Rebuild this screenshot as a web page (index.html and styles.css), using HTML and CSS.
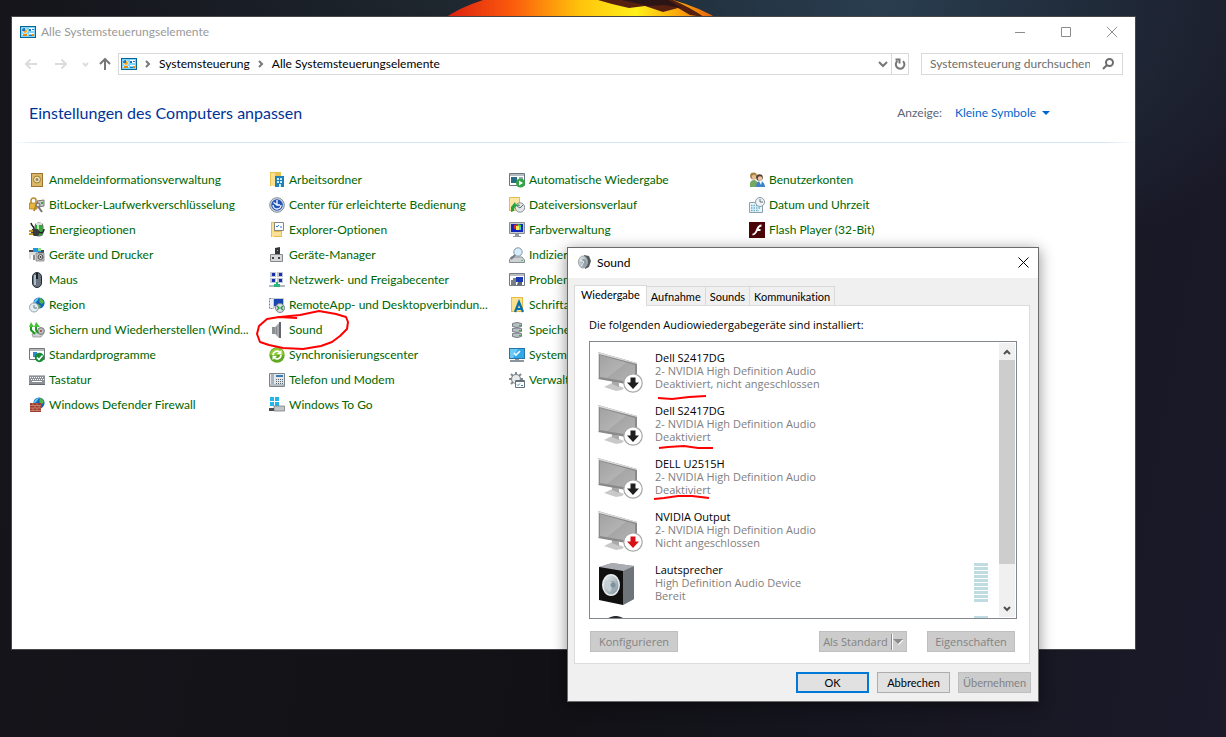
FILE: index.html
```html
<!DOCTYPE html>
<html lang="de">
<head>
<meta charset="utf-8">
<title>Alle Systemsteuerungselemente</title>
<link rel="stylesheet" href="styles.css">
</head>
<body>
<svg class="defs" aria-hidden="true">
  <defs>
    <linearGradient id="screenGrey" x1="0" y1="0" x2="1" y2="1"><stop offset="0" stop-color="#a2a2a2"/><stop offset=".5" stop-color="#b2b2b2"/><stop offset=".52" stop-color="#a6a6a6"/><stop offset="1" stop-color="#b4b4b4"/></linearGradient>
    <linearGradient id="cone" x1="0" y1="0" x2="1" y2="1"><stop offset="0" stop-color="#e8eef1"/><stop offset="1" stop-color="#7f929b"/></linearGradient>
    <linearGradient id="sun" x1="0" x2="1"><stop offset="0" stop-color="#d81c10"/><stop offset=".25" stop-color="#fb5a0c"/><stop offset=".5" stop-color="#ffc40c"/><stop offset=".7" stop-color="#fff01a"/><stop offset=".85" stop-color="#fba60c"/><stop offset="1" stop-color="#e2560e"/></linearGradient>
    <symbol id="cpl" viewBox="0 0 16 12"><path fill="#0a6496" d="M0 0h16v12H0z"/><path fill="#7fd4fa" d="M1 1h14v10H1z"/><circle cx="5" cy="5" r="2.500" fill="#fff"/><circle cx="5" cy="5" r="2" fill="#f5a31a"/><path fill="#1c74c4" d="M5 5V2a3 3 0 0 0-3 3z"/><path fill="#fff" d="M9 2h5v3H9zM2 8h6v1H2zM9 7h5v1H9z"/><path fill="#1c74c4" d="M9 3h2v2H9zM12 3h2v1h-2zM9 9h4v1H9z"/><path fill="#f08a00" d="M3 8h4v2H3zM12 8h2v2h-2z"/></symbol>
    <symbol id="monitor" viewBox="0 0 46 44"><path fill="#c9c9c9" d="M6 36l8-4 12 5-2 2-6 1z"/><path fill="#aaa" d="M14 29l7 3v4l-7-3z"/><path fill="#8a8a8a" d="M0 1l39 11v23L0 28z"/><path fill="#ddd" d="M0 1l39 11v1L1 3v24l-1 1z"/><path fill="url(#screenGrey)" d="M2 4l35 10v18L2 26z"/></symbol>
    <symbol id="down" viewBox="0 0 20 20"><circle cx="10" cy="10" r="9.200" fill="#fff" stroke="#a8a8a8" stroke-width="1.200"/><path fill="currentColor" d="M7.500 4.500h5v5H16l-6 6.500-6-6.500h3.500z"/></symbol>
    <symbol id="globe" viewBox="0 0 16 16"><circle cx="10" cy="6" r="5.600" fill="#1564b8"/><path fill="#63c9f2" d="M5 5c1-3 3-4 5-4l-2 3-3 3z"/><path fill="#4eb444" d="M10 1c3 0 4 2 5 4l-2 2-2-1-1-2 1-1zM9 7l3 2-1 2-2-1z"/></symbol>
  </defs>
</svg>
<main class="desktop">
  <svg class="wallpaper" viewBox="0 0 280 20" aria-hidden="true"><path fill="#3b1117" d="M0 20L40 0h196l44 20z" opacity=".5"/><path fill="url(#sun)" d="M2 20Q18 8 43 0h190q28 8 47 20z"/><path fill="#552010" d="M158 0h75q18 8 31 17l-14-2-12-7-15 4-18-6-16 2-17-4z"/><path fill="#2b1416" d="M182 0h46l14 8-18-3-16 1z"/></svg>

  <section class="window" aria-label="Alle Systemsteuerungselemente">
    <header class="titlebar">
      <svg class="cpl"><use href="#cpl"/></svg>
      <h1 class="title">Alle Systemsteuerungselemente</h1>
      <div class="caption">
        <button class="cap" aria-label="Minimieren"><svg viewBox="0 0 10 10"><path d="M0 5.500h10"/></svg></button>
        <button class="cap" aria-label="Maximieren"><svg viewBox="0 0 10 10"><path d="M.5.5h9v9h-9z"/></svg></button>
        <button class="cap" aria-label="Schließen"><svg viewBox="0 0 10 10"><path d="M0 0l10 10M10 0L0 10"/></svg></button>
      </div>
    </header>
    <nav class="toolbar" aria-label="Navigation">
      <button class="nav faint" aria-label="Zurück"><svg viewBox="0 0 12 12"><path d="M12 6H1M5.500 1.500L1 6l4.500 4.500"/></svg></button>
      <button class="nav faint" aria-label="Vorwärts"><svg viewBox="0 0 12 12"><path d="M0 6h11M6.500 1.500L11 6l-4.500 4.500"/></svg></button>
      <button class="nav small faint" aria-label="Verlauf"><svg viewBox="0 0 12 12"><path d="M1 5l2.500 2.500L6 5"/></svg></button>
      <button class="nav up" aria-label="Nach oben"><svg viewBox="0 0 12 12"><path d="M6 12V1M1 6l5-5 5 5"/></svg></button>
      <div class="address">
        <svg class="cpl"><use href="#cpl"/></svg>
        <svg class="sep" viewBox="0 0 6 8"><path d="M1 1l3 3-3 3"/></svg>
        <a class="crumb" href="#">Systemsteuerung</a>
        <svg class="sep" viewBox="0 0 6 8"><path d="M1 1l3 3-3 3"/></svg>
        <a class="crumb" href="#">Alle Systemsteuerungselemente</a>
        <button class="addr-btn drop" aria-label="Vorherige Orte"><svg viewBox="0 0 12 12"><path d="M2 4l4 4 4-4"/></svg></button>
        <button class="addr-btn reload" aria-label="Aktualisieren"><svg viewBox="0 0 12 12"><path d="M3.500 3A4.300 4.300 0 1 0 9 3.200M1.500 1.500h4v4"/></svg></button>
      </div>
      <div class="search">
        <input class="search-box" type="search" placeholder="Systemsteuerung durchsuchen" aria-label="Systemsteuerung durchsuchen">
        <svg viewBox="0 0 12 12"><circle cx="7.500" cy="4.500" r="3.500"/><path d="M5 7L1 11"/></svg>
      </div>
    </nav>
    <div class="head">
      <h2 class="heading">Einstellungen des Computers anpassen</h2>
      <label class="view-label" for="view">Anzeige:</label>
      <span class="view"><select id="view" class="view-select"><option>Kleine Symbole</option></select><svg viewBox="0 0 8 4"><path d="M0 0h8L4 4z"/></svg></span>
    </div>
    <div class="items">
      <ul class="col">
        <li><a class="item" href="#"><svg class="ico" viewBox="0 0 16 16"><path fill="#9a7430" d="M2 1h12v14H2z"/><path fill="#d9b968" d="M3 2h10v12H3z"/><circle cx="8" cy="7.500" r="3.500" fill="#f2e0ac" stroke="#a27b36"/><circle cx="8" cy="7.500" r="1.500" fill="#94866a"/></svg>Anmeldeinformationsverwaltung</a></li>
        <li><a class="item" href="#"><svg class="ico" viewBox="0 0 16 16"><path fill="#c8c8c8" stroke="#777" d="M8 4l7-1v6l-5 1z"/><path fill="#4b9b46" d="M12 5h2v2h-2z"/><path fill="none" stroke="#b88a2a" stroke-width="1.500" d="M2 6V3.500a2.300 2.300 0 0 1 5 0V6"/><path fill="#e6b53c" stroke="#9d7220" stroke-width=".7" d="M.5 6h7.500v6H.5z"/><path stroke="#bd8520" stroke-width="2" d="M8 6l-3 8"/><path stroke="#777" stroke-width="2" d="M8 8l5 7"/><circle cx="9" cy="8" r="2" fill="#ddd" stroke="#666"/></svg>BitLocker-Laufwerkverschlüsselung</a></li>
        <li><a class="item" href="#"><svg class="ico" viewBox="0 0 16 16"><rect x="6" y="1" width="8" height="13" rx="3" fill="#2eaa37" stroke="#777"/><path fill="#bce9b5" d="M8 3h2v9H8z"/><path fill="#ddd" d="M7 1h6v2H7z"/><path stroke="#222" stroke-width="1.500" fill="none" d="M2 1c1 4 3 3 3 6"/><path fill="#383b3d" d="M3 7h6l2 3-2 4H5l-3-3z"/><path stroke="#c4971e" stroke-width="2" d="M0 9h4M0 12h4"/><path stroke="#222" stroke-width="1.500" fill="none" d="M10 10c3 2 5 0 5-3"/></svg>Energieoptionen</a></li>
        <li><a class="item" href="#"><svg class="ico" viewBox="0 0 16 16"><path fill="#444b50" d="M0 3h15v4H0z"/><path fill="#2694dd" d="M4 1h8v4H4z"/><path fill="#8de08b" d="M9 1h3v3H9z"/><path fill="#dedede" d="M0 5h9v3H2v4H0z"/><path fill="#8c8c8c" d="M4 8h2v5H4z"/><path fill="#bec1c4" stroke="#868686" stroke-width=".8" d="M7 6h8v8H7z"/><circle cx="11.500" cy="10" r="2.400" fill="#eee" stroke="#444"/><circle cx="11.500" cy="10" r="1" fill="#333"/></svg>Geräte und Drucker</a></li>
        <li><a class="item" href="#"><svg class="ico" viewBox="0 0 16 16"><rect x="3.500" y=".5" width="9" height="15" rx="4.500" fill="#68737e" stroke="#222a32"/><path fill="#adb9c4" d="M5 3h2v10H5z"/><path stroke="#17212a" stroke-width="2" d="M8 1v6"/></svg>Maus</a></li>
        <li><a class="item" href="#"><svg class="ico" viewBox="0 0 16 16"><use href="#globe"/><circle cx="5" cy="10.500" r="4.500" fill="#e4edf1" stroke="#98a5ac"/><path fill="none" stroke="#6b7b84" d="M5 8v3h3"/></svg>Region</a></li>
        <li><a class="item" href="#"><svg class="ico" viewBox="0 0 16 16"><path fill="#cfd3d6" stroke="#888" stroke-width=".7" d="M3 12l7-4 5 3-3 4H4z"/><circle cx="12" cy="9" r="3.400" fill="#b9bec2" stroke="#777"/><circle cx="12" cy="9" r="1" fill="#b73827"/><path fill="none" stroke="#1a9b1d" stroke-width="2" d="M2 3v5l4 4M9 11L7 8V3"/><path fill="#45c236" d="M0 5l2-5 3 5zM5 5l2-5 4 5z"/></svg>Sichern und Wiederherstellen (Wind...</a></li>
        <li><a class="item" href="#"><svg class="ico" viewBox="0 0 16 16"><path fill="#fff" stroke="#72777c" d="M.5 1.500h15v11H.5z"/><path stroke="#72777c" d="M0 3h16"/><path fill="#2e89cf" d="M4 5h4v5H4z"/><circle cx="10.500" cy="10.500" r="4.700" fill="#188b36"/><path fill="none" stroke="#fff" stroke-width="1.600" d="M8 10.500l2 2 3.500-4"/></svg>Standardprogramme</a></li>
        <li><a class="item" href="#"><svg class="ico" viewBox="0 0 16 16"><path fill="#8a9095" d="M0 3h16v10H0z"/><path fill="#b9bec2" d="M0 3h16v1H0z"/><path fill="#62686d" d="M0 12h16v1H0z"/><path stroke="#fff" stroke-dasharray="1 1" d="M1 5.500h14M2 7.500h13"/><path stroke="#fff" d="M3 9.500h10"/></svg>Tastatur</a></li>
        <li><a class="item" href="#"><svg class="ico" viewBox="0 0 16 16"><use href="#globe"/><path fill="#9d3d2d" d="M1 6h11v9H1z"/><path stroke="#d69382" stroke-width=".7" d="M1 8.500h11M1 11h11M1 13.500h11M4 6v2.500M8 6v2.500M6 8.500V11M10 8.500V11M4 11v2.500M8 11v2.500"/></svg>Windows Defender Firewall</a></li>
      </ul>
      <ul class="col">
        <li><a class="item" href="#"><svg class="ico" viewBox="0 0 16 16"><path fill="#e9c254" d="M1 0h11v14H1z"/><path fill="#fbe092" d="M2 1h4v13H2z"/><path fill="#2181b7" d="M6 4h9v11H6z"/><path fill="#c5edff" d="M8 6h2v2H8zM11 6h2v2h-2zM8 9h2v2H8zM11 9h2v2h-2zM10 12h2v3h-2z"/></svg>Arbeitsordner</a></li>
        <li><a class="item" href="#"><svg class="ico" viewBox="0 0 16 16"><circle cx="8" cy="8" r="7.300" fill="#d5dae0" stroke="#858c95"/><circle cx="8" cy="8" r="5.800" fill="#2355b8"/><path fill="none" stroke="#fff" stroke-width="1.300" d="M4 8a4 4 0 0 0 8 0M8 3v5h3M4.500 5.500L8 8"/></svg>Center für erleichterte Bedienung</a></li>
        <li><a class="item" href="#"><svg class="ico" viewBox="0 0 16 16"><path fill="#e8bd49" d="M2 0h11v15H2z"/><path fill="#fbe196" d="M3 1h2v14H3zM5 10h7v4H5z"/><path fill="#fff" stroke="#7f868c" d="M5.500.5h9v8h-9z"/><path fill="none" stroke="#2b76b8" d="M7 4l1 1 2-2M11 5h2"/></svg>Explorer-Optionen</a></li>
        <li><a class="item" href="#"><svg class="ico" viewBox="0 0 16 16"><path fill="#34383b" d="M6 1l5-1v7H6z"/><path fill="#54d85d" d="M8 3h1v1H8z"/><path fill="#d7d8d9" stroke="#85898c" d="M1.500 7.500h12v7h-12z"/><path fill="#444" d="M3 10h2v2H3zM9 10h2v2H9z"/></svg>Geräte-Manager</a></li>
        <li><a class="item" href="#"><svg class="ico" viewBox="0 0 16 16"><path fill="#c1c8d2" d="M1 0h6v5H1zM8 0h6v5H8zM1 6h6v5H1zM8 6h6v5H8z"/><path fill="#1830ae" d="M3 1h3v3H3zM10 1h3v3h-3zM3 7h3v3H3zM10 7h3v3h-3z"/><path stroke="#b3b8bd" stroke-width="2" d="M0 14h16"/><path fill="#2db67b" d="M7 10h2v2h2v3H5v-3h2z"/></svg>Netzwerk- und Freigabecenter</a></li>
        <li><a class="item" href="#"><svg class="ico" viewBox="0 0 16 16"><path fill="#eef1f7" stroke="#7984a1" stroke-dasharray="2 1" d="M.5 1.500h4v10h-4z"/><path fill="#c6cad2" d="M4 1h11v10H4z"/><path fill="#1745b1" d="M5 2h9v7H5z"/><circle cx="11" cy="11" r="4.500" fill="#d9dee3" stroke="#7b858c"/><path fill="none" stroke="#1b9438" stroke-width="1.300" d="M8 9l2 2-2 2M14 9l-2 2 2 2"/></svg>RemoteApp- und Desktopverbindun...</a></li>
        <li><a class="item" href="#"><svg class="ico" viewBox="0 0 16 16"><path fill="#8c8f94" d="M3 5h3v7H3z"/><path fill="#a5a9ae" d="M6 5l4-4v15l-4-4z"/><path fill="#62666b" d="M10 0h2v16h-2z"/><path fill="#85898e" d="M7 5h1v7H7z"/></svg>Sound</a></li>
        <li><a class="item" href="#"><svg class="ico" viewBox="0 0 16 16"><circle cx="8" cy="8" r="7.700" fill="#5fa81f"/><path fill="#93ca38" d="M8 1a7 7 0 0 0-7 7h14a7 7 0 0 0-7-7z"/><path fill="none" stroke="#fff" stroke-width="1.800" d="M4 8a4 4 0 0 1 6.500-3M12 8a4 4 0 0 1-6.500 3"/><path fill="#fff" d="M12.500 3v4.500L8 7zM3.500 13V8.500L8 9z"/></svg>Synchronisierungscenter</a></li>
        <li><a class="item" href="#"><svg class="ico" viewBox="0 0 16 16"><path fill="#e4e8ec" stroke="#7c858c" d="M.5 1.500h15v13H.5z"/><path fill="#a9b5be" d="M2 2h3v10H2z"/><path fill="#397cb4" d="M7 3h7v2H7z"/><path stroke="#59656d" stroke-dasharray="1 1" d="M7 7.500h7M7 9.500h7M7 11.500h7"/><path stroke="#88939a" d="M1 13h14"/></svg>Telefon und Modem</a></li>
        <li><a class="item" href="#"><svg class="ico" viewBox="0 0 16 16"><path fill="#21b5ea" d="M1 0h4v4H1zM6 0h4v4H6zM1 5h4v4H1zM6 5h4v4H6z"/><path fill="#c3c6c9" stroke="#7b7f82" stroke-width=".8" d="M5 9h10.500v5H5z"/><path fill="#4b4e51" d="M0 11h5v3H0z"/></svg>Windows To Go</a></li>
      </ul>
      <ul class="col">
        <li><a class="item" href="#"><svg class="ico" viewBox="0 0 16 16"><path fill="#fff" stroke="#687782" d="M.5 1.500h15v12H.5z"/><path stroke="#687782" d="M0 3h16"/><path fill="#296d83" d="M2 5h6v6H2z"/><path fill="#9aadb8" d="M10 5h4v3h-4z"/><circle cx="11.500" cy="11" r="4.500" fill="#32a644"/><path fill="#fff" d="M10 8.500l4 2.500-4 2.500z"/></svg>Automatische Wiedergabe</a></li>
        <li><a class="item" href="#"><svg class="ico" viewBox="0 0 16 16"><path fill="#e6bd53" d="M0 0h11v14H0z"/><path fill="#fce6a3" d="M1 1h9v12H1z"/><circle cx="11" cy="10.500" r="4.700" fill="#e4e7e9" stroke="#899198"/><path fill="none" stroke="#606a70" d="M11 11l3-3M11 11L8 9"/><path fill="#26a23e" d="M2 10l4-5 1 3c3-1 4 0 4 1-4-1-6 1-6 5l-3 1z"/></svg>Dateiversionsverlauf</a></li>
        <li><a class="item" href="#"><svg class="ico" viewBox="0 0 16 16"><path fill="#c8cdd2" stroke="#888f96" d="M.5.5h15v11H.5z"/><path fill="#1225bd" d="M2 2h12v8H2z"/><path fill="#e92828" d="M5 3l4-1v4l-4 1z"/><path fill="#40d746" d="M9 2l3 1v4L9 6z"/><path fill="#f4ed4c" d="M7 4h3v4H7z"/><path fill="#3ec8ec" d="M10 5h2v3h-2z"/><path fill="#92999f" d="M6 12h4v2h2v1H4v-1h2z"/></svg>Farbverwaltung</a></li>
        <li><a class="item" href="#"><svg class="ico" viewBox="0 0 16 16"><path fill="#ced2d6" stroke="#878d93" d="M2 10h11l2.500 3v2.500H.5V13z"/><path fill="#48c650" d="M12 13h2v1h-2z"/><circle cx="9" cy="5" r="4.200" fill="#d7eefa" stroke="#8398a6"/><path stroke="#737c84" stroke-width="2" d="M6 8l-4 4"/></svg>Indizierungsoptionen</a></li>
        <li><a class="item" href="#"><svg class="ico" viewBox="0 0 16 16"><path fill="#fff" stroke="#737c85" d="M.5 1.500h15v12H.5z"/><path stroke="#737c85" d="M0 3h16"/><path fill="#777f86" d="M2 8h3v5H2zM4 6h3v7H4z"/><path fill="#1838b6" d="M7 5h7v5H7z"/><path fill="#5e686f" d="M9 10h4v3H8z"/></svg>Problembehandlung</a></li>
        <li><a class="item" href="#"><svg class="ico" viewBox="0 0 16 16"><path fill="#e8bc49" d="M2 0h12v15H2z"/><path fill="#fbe08d" d="M3 1h10v13H3z"/><path fill="none" stroke="#0870af" stroke-width="2.200" d="M6 15l4-10 4 10M7.500 12h5"/></svg>Schriftarten</a></li>
        <li><a class="item" href="#"><svg class="ico" viewBox="0 0 16 16"><path fill="#b9bec3" stroke="#777e85" d="M3.500 1.500q4.500-2 9 0v3q-4.500 2-9 0zM3.500 6.500q4.500-1 9 0v3q-4.500 2-9 0zM3.500 11.500q4.500-1 9 0v3q-4.500 2-9 0z"/><path fill="#38ae43" d="M10 3h2v1h-2zM10 8h2v1h-2zM10 13h2v1h-2z"/></svg>Speicherplätze</a></li>
        <li><a class="item" href="#"><svg class="ico" viewBox="0 0 16 16"><path fill="#2b73a0" d="M0 1h16v11H0z"/><path fill="#30a9eb" d="M1 2h14v9H1z"/><path fill="#6bc9f5" d="M1 2h8L4 11H1z"/><path fill="none" stroke="#fff" stroke-width="1.600" d="M5 6l2 2 4-4"/><path fill="#8d969c" d="M6 12h4v1h5v2H1v-2h5z"/></svg>System</a></li>
        <li><a class="item" href="#"><svg class="ico" viewBox="0 0 16 16"><circle cx="7" cy="7" r="4.500" fill="#e8eaec" stroke="#82898f" stroke-width="1.200"/><path stroke="#82898f" stroke-width="2" d="M7 0v3M2 2l2 2M0 7h3M12 2l-2 2M2 12l2-2M11 7h3"/><path fill="#fff" stroke="#64717b" d="M6.500 8.500h9v7h-9z"/><path stroke="#64717b" d="M6 9.500h10"/><path stroke="#3c81b5" d="M8 12.500l1 1 2-2M12 13.500h2" fill="none"/></svg>Verwaltung</a></li>
      </ul>
      <ul class="col">
        <li><a class="item" href="#"><svg class="ico" viewBox="0 0 16 16"><circle cx="4.500" cy="4" r="3.400" fill="#a8813f"/><circle cx="5" cy="5" r="2.200" fill="#e6bc94"/><path fill="#75a662" d="M1 15q-1-7 4-7 4 0 4 7z"/><circle cx="10.500" cy="5.500" r="3.300" fill="#54402c"/><circle cx="11" cy="6.500" r="2.200" fill="#edc7a6"/><path fill="#3f82c5" d="M7 15q0-6 4-6t5 5v1z"/><path fill="#fff" d="M10 9h3l-1 4z"/></svg>Benutzerkonten</a></li>
        <li><a class="item" href="#"><svg class="ico" viewBox="0 0 16 16"><path fill="#eaf5fa" stroke="#8ca3ae" d="M.5 5.500h13v10H.5z"/><path stroke="#66aeca" stroke-width="1.300" stroke-dasharray="1.500 1" d="M2 8.500h10M2 11h10M2 13.500h8"/><circle cx="11" cy="5" r="4.500" fill="#f0f4f5" stroke="#8c9aa2"/><path fill="none" stroke="#64737b" d="M11 2v3h3"/></svg>Datum und Uhrzeit</a></li>
        <li><a class="item" href="#"><svg class="ico" viewBox="0 0 16 16"><path fill="#4a0508" d="M0 0h16v16H0z"/><path fill="none" stroke="#fff" stroke-width="2" d="M12.500 3.500c-3 0-3.500 2-4.500 4.500S5.500 12.500 3.500 12.500M8 8h3.500"/></svg>Flash Player (32-Bit)</a></li>
        <li><a class="item" href="#"><svg class="ico" viewBox="0 0 16 16"><circle cx="6" cy="7" r="7" fill="#397bb0"/></svg>Internetoptionen</a></li>
      </ul>
    </div>
    <svg class="mark-circle" viewBox="0 0 94 40" aria-hidden="true"><path d="M41 4l-18-1L11 5 3 12 1 20l3 8 9 3 14 3 20 1 18-3 11-4 8-6 7-7 1-7-2-5-10-3-17-3L44 1 24 3"/></svg>
  </section>

  <section class="dialog" role="dialog" aria-label="Sound">
    <header class="dlg-title">
      <svg class="dlg-icon" viewBox="0 0 16 16"><path fill="#555a5d" d="M7 1l5 1 2 5-2 6-4 2z"/><ellipse cx="6" cy="8" rx="4.500" ry="6" fill="url(#cone)" stroke="#a0a8ab"/><ellipse cx="7" cy="8" rx="2" ry="3" fill="#8d9ba2"/><path stroke="#f4f4f4" fill="none" d="M3 6l4 2-3 4"/></svg>
      <h2 class="dlg-name">Sound</h2>
      <button class="dlg-close" aria-label="Schließen"><svg viewBox="0 0 11 11"><path d="M.5.5l10 10M10.500.5l-10 10"/></svg></button>
    </header>
    <div class="dlg-body">
      <div class="tabs" role="tablist">
        <button class="tab active" role="tab" aria-selected="true">Wiedergabe</button>
        <button class="tab" role="tab">Aufnahme</button>
        <button class="tab" role="tab">Sounds</button>
        <button class="tab" role="tab">Kommunikation</button>
      </div>
      <div class="panel" role="tabpanel">
        <p class="intro" id="intro">Die folgenden Audiowiedergabegeräte sind installiert:</p>
        <div class="listbox">
          <ul class="devices" aria-labelledby="intro">
            <li class="device"><span class="pic"><svg class="mon"><use href="#monitor"/></svg><svg class="badge"><use href="#down"/></svg></span><span class="info"><b>Dell S2417DG</b><span>2- NVIDIA High Definition Audio</span><span>Deaktiviert, nicht angeschlossen</span></span><svg class="underline" viewBox="0 0 60 8" aria-hidden="true"><path d="M3 5l14 1 17-2 17-1"/></svg></li>
            <li class="device"><span class="pic"><svg class="mon"><use href="#monitor"/></svg><svg class="badge"><use href="#down"/></svg></span><span class="info"><b>Dell S2417DG</b><span>2- NVIDIA High Definition Audio</span><span>Deaktiviert</span></span><svg class="underline" viewBox="0 0 60 8" aria-hidden="true"><path d="M4 2l9-1 16-1 14 2 15 0"/></svg></li>
            <li class="device"><span class="pic"><svg class="mon"><use href="#monitor"/></svg><svg class="badge"><use href="#down"/></svg></span><span class="info"><b>DELL U2515H</b><span>2- NVIDIA High Definition Audio</span><span>Deaktiviert</span></span><svg class="underline" viewBox="0 0 60 8" aria-hidden="true"><path d="M-1 0l10-1 14-2 14 0 17 2"/></svg></li>
            <li class="device"><span class="pic"><svg class="mon"><use href="#monitor"/></svg><svg class="badge red"><use href="#down"/></svg></span><span class="info"><b>NVIDIA Output</b><span>2- NVIDIA High Definition Audio</span><span>Nicht angeschlossen</span></span></li>
            <li class="device"><span class="pic"><svg class="speaker" viewBox="0 0 38 42"><path fill="#8b8e94" d="M1 4l13-4 22 3v33l-11 6z"/><path fill="#6f747b" d="M25 8l11-5v33l-11 6z"/><path fill="#a9acb1" d="M1 4l13-4 22 3-11 5z"/><path fill="#101010" d="M1 4l24 4v34L1 37z"/><ellipse cx="13" cy="22" rx="9" ry="11" fill="#e9edef"/><ellipse cx="13" cy="22" rx="7.500" ry="9.500" fill="url(#cone)"/><ellipse cx="14.500" cy="22" rx="3" ry="4" fill="#93a5ad"/><path fill="#c5d1d6" d="M7 17l9 3-4 9q-6-3-5-12z"/><circle cx="15" cy="22" r="2.500" fill="#7d929c"/></svg></span><span class="info"><b>Lautsprecher</b><span>High Definition Audio Device</span><span>Bereit</span></span><span class="meter"></span></li>
            <li class="device"><span class="pic"><svg class="speaker" viewBox="0 0 38 42"><path fill="none" stroke="#2b2b2b" stroke-width="3" d="M7 6Q18-3 28 6"/></svg></span><span class="info"></span><span class="meter"></span></li>
          </ul>
          <div class="scrollbar">
            <button class="sb-btn" aria-label="Nach oben"><svg viewBox="0 0 12 12"><path d="M3 8l3-3 3 3"/></svg></button>
            <div class="sb-thumb"></div>
            <button class="sb-btn end" aria-label="Nach unten"><svg viewBox="0 0 12 12"><path d="M3 4l3 3 3-3"/></svg></button>
          </div>
        </div>
        <div class="row">
          <button class="btn wide left" disabled>Konfigurieren</button>
          <button class="btn wide split" disabled>Als Standard<svg viewBox="0 0 13 16"><path stroke="#8c8c8c" d="M1.500 0v16"/><path stroke="#fff" d="M2.500 0v16"/><path fill="#fff" d="M4 6h9.500L9 11z"/><path fill="#8c8c8c" d="M3 5h10l-5 5z"/></svg></button>
          <button class="btn wide" disabled>Eigenschaften</button>
        </div>
      </div>
      <footer class="actions">
        <button class="btn ok">OK</button>
        <button class="btn">Abbrechen</button>
        <button class="btn" disabled>Übernehmen</button>
      </footer>
    </div>
  </section>
</main>
</body>
</html>
```
FILE: styles.css
```css
* { box-sizing: border-box; }
body { margin: 0; font: 12px/16px Lato, "Open Sans", sans-serif; font-variant-ligatures: none; color: #000; }
svg { display: block; flex: none; }
ul, h1, h2, p { margin: 0; padding: 0; list-style: none; font-size: inherit; font-weight: 400; }
button, input, select { font: inherit; color: inherit; margin: 0; padding: 0; border: 0; background: none; border-radius: 0; }
a { color: inherit; text-decoration: none; }
.defs { position: absolute; width: 0; height: 0; }

.desktop {
  position: relative; min-height: 100vh; overflow: hidden;
  background:
    radial-gradient(ellipse 440px 300px at 880px 0, #293e50, rgba(41, 62, 80, 0)),
    radial-gradient(ellipse 500px 120px at 520px 0, rgba(36, 48, 58, .8), rgba(36, 48, 58, 0)),
    linear-gradient(100deg, #15151b 0, #111116 50%, #1b1a2a 100%);
}
.wallpaper { position: absolute; left: 440px; top: 0; width: 280px; height: 20px; }

/* Control panel window */
.window {
  position: absolute; inset: 16px 90px 87px 11px;
  display: flex; flex-direction: column;
  background: #fff; border: 1px solid #45474a;
}
.titlebar { display: flex; align-items: center; height: 29px; padding-left: 8px; }
.cpl { width: 16px; height: 12px; }
.title { flex: 1; margin-left: 5px; color: #999; white-space: nowrap; }
.caption { display: flex; }
.cap { width: 46px; height: 29px; display: grid; place-items: center; }
.cap svg { width: 10px; height: 10px; fill: none; stroke: #8c8c8c; }

.toolbar { display: flex; align-items: center; height: 36px; padding: 0 12px 0 10px; }
.nav { width: 30px; height: 22px; display: flex; align-items: center; padding-left: 3px; color: #767676; }
.nav.small { width: 17px; padding: 0; }
.nav.up { width: 19px; padding: 0; }
.nav svg { width: 12px; height: 12px; fill: none; stroke: currentColor; stroke-width: 2; }
.nav.faint { color: #dcdcdc; }
.address { flex: 1; display: flex; align-items: center; height: 22px; border: 1px solid #d9d9d9; padding-left: 2px; }
.sep { width: 6px; height: 8px; margin: 0 8px; fill: none; stroke: #777; stroke-width: 2; }
.crumb { white-space: nowrap; }
.addr-btn { width: 17px; height: 20px; display: grid; place-items: center; color: #767676; }
.addr-btn svg { width: 12px; height: 12px; fill: none; stroke: currentColor; stroke-width: 2; }
.drop { margin-left: auto; }
.reload { border-left: 1px solid #d9d9d9; }
.search { display: flex; align-items: center; width: 202px; height: 22px; margin-left: 12px; padding: 0 8px; border: 1px solid #d9d9d9; }
.search-box { flex: 1; min-width: 0; appearance: none; outline: 0; }
.search-box::placeholder { color: #6d6d6d; opacity: 1; }
.search svg { width: 12px; height: 12px; fill: none; stroke: #6d6d6d; stroke-width: 2; }

.head {
  display: flex; align-items: center; height: 61px; padding: 1px 85px 0 17px;
  border-bottom: 1px solid; border-image: linear-gradient(90deg, #fff, #d3e3f3 3%, #d3e3f3 97%, #fff) 1;
}
.heading { flex: 1; font-size: 16px; line-height: 22px; color: #003399; white-space: nowrap; }
.view-label { color: #5a6475; }
.view { display: flex; align-items: center; gap: 5px; margin-left: 13px; color: #0066cc; }
.view-select { appearance: none; }
.view svg { width: 8px; height: 4px; fill: #0066cc; }

.items { display: flex; padding: 24px 17px; }
.col { width: 240px; flex: none; }
.item { display: flex; align-items: center; gap: 4px; height: 25px; color: #006600; white-space: nowrap; }
.ico { width: 16px; height: 16px; }

.mark-circle { position: absolute; left: 244px; top: 297px; width: 94px; height: 40px; overflow: visible; fill: none; stroke: #f00; stroke-width: 2; stroke-linejoin: round; }

/* Sound dialog */
.dialog {
  position: absolute; left: 567px; top: 247px; width: 472px;
  display: flex; flex-direction: column;
  background: #f0f0f0; border: 1px solid #6b6b6b;
  box-shadow: 0 3px 14px rgba(0, 0, 0, .45);
  font-size: 11px; line-height: 13px;
}
.dlg-title { display: flex; align-items: center; height: 30px; padding: 0 9px 2px; background: #fff; font-size: 12px; }
.dlg-icon { width: 16px; height: 16px; }
.dlg-name { flex: 1; margin-left: 4px; }
.dlg-close svg { width: 11px; height: 11px; fill: none; stroke: #000; }
.dlg-body { padding: 7px 7px 8px 6px; }
.tabs { display: flex; align-items: flex-end; }
.tab { height: 19px; padding: 0 4px; border: 1px solid #d9d9d9; border-width: 1px 1px 0 0; white-space: nowrap; }
.tab.active { height: 21px; padding: 0 6px 3px; background: #fff; border-width: 1px 1px 0 1px; margin-bottom: -1px; position: relative; }
.panel { margin-right: 1px; padding: 13px 12px 11px 14px; background: #fff; border: 1px solid #dcdcdc; font-family: "Open Sans", "Noto Sans", sans-serif; }
.intro { margin-top: -1px; }
.listbox { display: flex; height: 278px; margin-top: 10px; border: 1px solid #828790; overflow: hidden; padding: 1px; }
.devices { flex: 1; }
.device { position: relative; display: flex; height: 53px; padding: 8px 11px 0 7px; }
.pic { position: relative; width: 57px; flex: none; }
.mon { width: 46px; height: 44px; }
.badge { position: absolute; left: 25px; top: 22px; width: 20px; height: 20px; color: #1e1e1e; }
.badge.red { color: #d80f14; }
.speaker { width: 38px; height: 42px; }
.info { flex: 1; display: flex; flex-direction: column; color: #808080; white-space: nowrap; }
.info b { font-weight: 400; color: #000; }
.meter { width: 14px; height: 39px; background: repeating-linear-gradient(#c0dbe2 0 3px, #fff 3px 4px); }
.underline { position: absolute; left: 64px; top: 50px; width: 60px; height: 8px; overflow: visible; fill: none; stroke: #f00; stroke-width: 2; }
.scrollbar { display: flex; flex-direction: column; width: 16px; background: #f0f0f0; }
.sb-btn { height: 17px; display: grid; place-items: center; }
.sb-btn svg { width: 12px; height: 12px; fill: none; stroke: #505050; stroke-width: 2; }
.sb-thumb { height: 204px; background: #cdcdcd; }
.end { margin-top: auto; }
.row { display: flex; gap: 20px; margin-top: 12px; padding: 0 2px 0 1px; }
.left { margin-right: auto; }
.btn { display: flex; align-items: center; justify-content: center; width: 73px; height: 21px; background: #e1e1e1; border: 1px solid #adadad; white-space: nowrap; }
.btn.wide { width: 88px; }
.btn.ok { border: 2px solid #0078d7; }
.btn:disabled { background: #ccc; border-color: #bfbfbf; color: #838383; }
.split { gap: 2px; }
.split svg { width: 13px; height: 16px; }
.actions { display: flex; justify-content: flex-end; gap: 8px; padding-top: 8px; }
```
